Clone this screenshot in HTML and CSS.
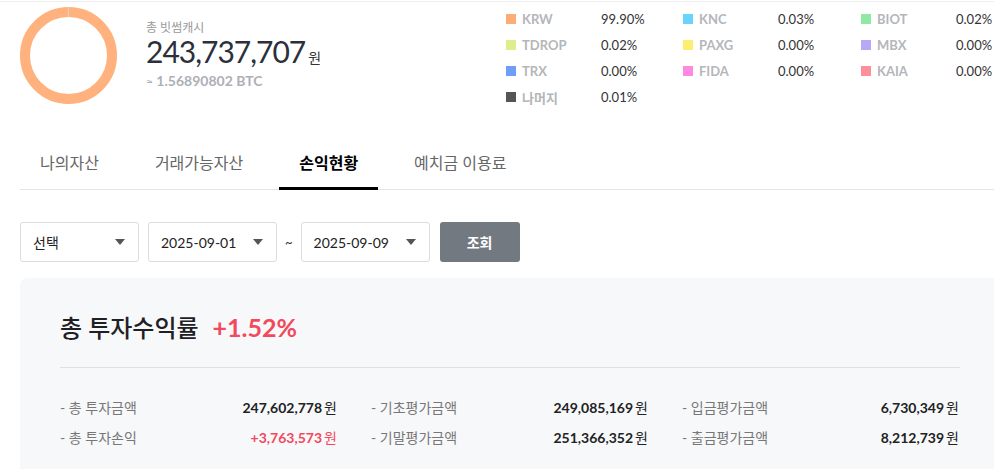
FILE: index.html
```html
<!DOCTYPE html>
<html lang="ko">
<head>
<meta charset="utf-8">
<title>손익현황</title>
<link rel="stylesheet" href="styles.css">
</head>
<body>
<div class="page">
  <header class="summary">
    <div class="donut"></div>
    <div class="info">
      <div class="info-label">총 빗썸캐시</div>
      <div class="info-total">243,737,707<span class="won">원</span></div>
      <div class="info-btc"><span class="approx">≈</span> 1.56890802 BTC</div>
    </div>
    <ul class="legend">
      <li class="legend-item"><span class="sw sw-krw"></span><span class="lg-name">KRW</span><span class="lg-pct">99.90%</span></li>
      <li class="legend-item"><span class="sw sw-knc"></span><span class="lg-name">KNC</span><span class="lg-pct">0.03%</span></li>
      <li class="legend-item"><span class="sw sw-biot"></span><span class="lg-name">BIOT</span><span class="lg-pct">0.02%</span></li>
      <li class="legend-item"><span class="sw sw-tdrop"></span><span class="lg-name">TDROP</span><span class="lg-pct">0.02%</span></li>
      <li class="legend-item"><span class="sw sw-paxg"></span><span class="lg-name">PAXG</span><span class="lg-pct">0.00%</span></li>
      <li class="legend-item"><span class="sw sw-mbx"></span><span class="lg-name">MBX</span><span class="lg-pct">0.00%</span></li>
      <li class="legend-item"><span class="sw sw-trx"></span><span class="lg-name">TRX</span><span class="lg-pct">0.00%</span></li>
      <li class="legend-item"><span class="sw sw-fida"></span><span class="lg-name">FIDA</span><span class="lg-pct">0.00%</span></li>
      <li class="legend-item"><span class="sw sw-kaia"></span><span class="lg-name">KAIA</span><span class="lg-pct">0.00%</span></li>
      <li class="legend-item"><span class="sw sw-etc"></span><span class="lg-name">나머지</span><span class="lg-pct">0.01%</span></li>
    </ul>
  </header>

  <nav class="tabs">
    <a class="tab">나의자산</a>
    <a class="tab">거래가능자산</a>
    <a class="tab tab-active">손익현황</a>
    <a class="tab">예치금 이용료</a>
  </nav>

  <div class="filters">
    <div class="select select-type"><span>선택</span><i class="caret"></i></div>
    <div class="select select-date"><span>2025-09-01</span><i class="caret"></i></div>
    <span class="tilde">~</span>
    <div class="select select-date"><span>2025-09-09</span><i class="caret"></i></div>
    <button class="btn-search">조회</button>
  </div>

  <section class="card">
    <h2 class="card-title">총 투자수익률 <span class="rate">+1.52%</span></h2>
    <div class="stats">
      <div class="stat"><span class="stat-label">- 총 투자금액</span><span class="stat-value">247,602,778<span class="won-s">원</span></span></div>
      <div class="stat"><span class="stat-label">- 기초평가금액</span><span class="stat-value">249,085,169<span class="won-s">원</span></span></div>
      <div class="stat"><span class="stat-label">- 입금평가금액</span><span class="stat-value">6,730,349<span class="won-s">원</span></span></div>
      <div class="stat"><span class="stat-label">- 총 투자손익</span><span class="stat-value up">+3,763,573<span class="won-s">원</span></span></div>
      <div class="stat"><span class="stat-label">- 기말평가금액</span><span class="stat-value">251,366,352<span class="won-s">원</span></span></div>
      <div class="stat"><span class="stat-label">- 출금평가금액</span><span class="stat-value">8,212,739<span class="won-s">원</span></span></div>
    </div>
  </section>
</div>
</body>
</html>
```

FILE: styles.css
```css
html, body {
  margin: 0;
  padding: 0;
  background: #fff;
  overflow: hidden;
}
body {
  font-family: "Lato", "Noto Sans CJK KR", sans-serif;
  color: #333;
}
.page {
  padding-top: 1px;
  width: 1000px;
}

/* summary */
.summary {
  display: flex;
  border-top: 1px solid #eeeeee;
  height: 110px;
}
.donut {
  flex: 0 0 auto;
  position: relative;
  box-sizing: border-box;
  width: 97px;
  height: 97px;
  margin: 5px 0 0 20px;
  border: 10px solid #ffb17e;
  border-radius: 50%;
}
.donut::after {
  content: "";
  position: absolute;
  top: -10px;
  left: 38px;
  width: 1px;
  height: 10px;
  background: #d9d4cc;
}
.info {
  flex: 0 0 360px;
  margin-left: 29px;
  padding-top: 19px;
}
.info-label {
  font-size: 12px;
  line-height: 14px;
  color: #999;
}
.info-total {
  font-size: 30px;
  line-height: 33px;
  color: #2b303b;
  letter-spacing: -1px;
}
.won {
  font-size: 14px;
  line-height: 1;
  margin-left: 3px;
  letter-spacing: 0;
  color: #333;
}
.info-btc {
  margin-top: 4px;
  font-size: 14px;
  line-height: 18px;
  font-weight: 700;
  color: #adb0b6;
}
.approx {
  font-size: 12px;
  font-weight: 400;
  line-height: 1;
}

.legend {
  list-style: none;
  margin: 0;
  padding: 4px 0 0;
  display: grid;
  grid-template-columns: 177px 178px 178px;
  grid-auto-rows: 26px;
  align-content: start;
}
.legend-item {
  display: flex;
  align-items: center;
  font-size: 13px;
}
.sw {
  width: 10px;
  height: 10px;
  margin-right: 6px;
  flex: 0 0 auto;
}
.lg-name {
  width: 79px;
  color: #b4b6ba;
  font-weight: 700;
}
.lg-pct {
  color: #333;
}
.sw-krw { background: #ffad78; }
.sw-knc { background: #66d4fc; }
.sw-biot { background: #8fe8a3; }
.sw-tdrop { background: #dcef8c; }
.sw-paxg { background: #fdee6f; }
.sw-mbx { background: #b7a8f8; }
.sw-trx { background: #6f9ef8; }
.sw-fida { background: #fd89e0; }
.sw-kaia { background: #fd8f98; }
.sw-etc { background: #555555; }

/* tabs */
.tabs {
  display: flex;
  gap: 16px;
  margin: 29px 0 0 20px;
  border-bottom: 1px solid #e5e5e5;
}
.tab {
  display: block;
  padding: 11px 20px 13px;
  line-height: 22px;
  font-size: 16px;
  color: #666;
  border-bottom: 3px solid transparent;
  margin-bottom: -1px;
}
.tab-active {
  color: #000;
  font-weight: 700;
  border-bottom-color: #000;
}

/* filters */
.filters {
  display: flex;
  align-items: center;
  gap: 9px;
  margin: 32px 0 0 20px;
  height: 40px;
}
.select {
  box-sizing: border-box;
  height: 40px;
  display: flex;
  align-items: center;
  justify-content: space-between;
  padding: 0 13px 0 12px;
  border: 1px solid #dcdcdc;
  border-radius: 3px;
  font-size: 14px;
  color: #222;
}
.select-type { width: 119px; }
.select-date { width: 129px; }
.caret {
  width: 0;
  height: 0;
  border-left: 5px solid transparent;
  border-right: 5px solid transparent;
  border-top: 6px solid #555;
}
.tilde {
  font-size: 13px;
  color: #333;
  margin: 0 -1px 0 -1px;
}
.btn-search {
  width: 80px;
  height: 40px;
  margin-left: 1px;
  border: 0;
  border-radius: 3px;
  background: #727981;
  color: #fff;
  font-family: "Lato", "Noto Sans CJK KR", sans-serif;
  font-size: 14px;
  font-weight: 700;
}

/* card */
.card {
  margin: 16px 0 0 20px;
  padding: 32px 40px 40px;
  background: #f7f8fa;
  border-radius: 8px 0 0 0;
}
.card-title {
  margin: 0;
  padding-bottom: 22px;
  border-bottom: 1px solid #dfe0e3;
  font-size: 24px;
  line-height: 34px;
  font-weight: 500;
  color: #1f2024;
}
.rate {
  margin-left: 8px;
  color: #f2495d;
  font-weight: 700;
  font-size: 25px;
}
.stats {
  display: grid;
  grid-template-columns: repeat(3, 277px);
  column-gap: 34px;
  grid-auto-rows: 30px;
  margin-top: 24px;
}
.stat {
  display: flex;
  align-items: center;
  justify-content: space-between;
  font-size: 14px;
}
.stat-label {
  color: #777;
}
.stat-value {
  font-weight: 700;
  color: #222;
}
.won-s {
  font-weight: 400;
  margin-left: 2px;
}
.stat-value.up {
  color: #f2495d;
}
```
